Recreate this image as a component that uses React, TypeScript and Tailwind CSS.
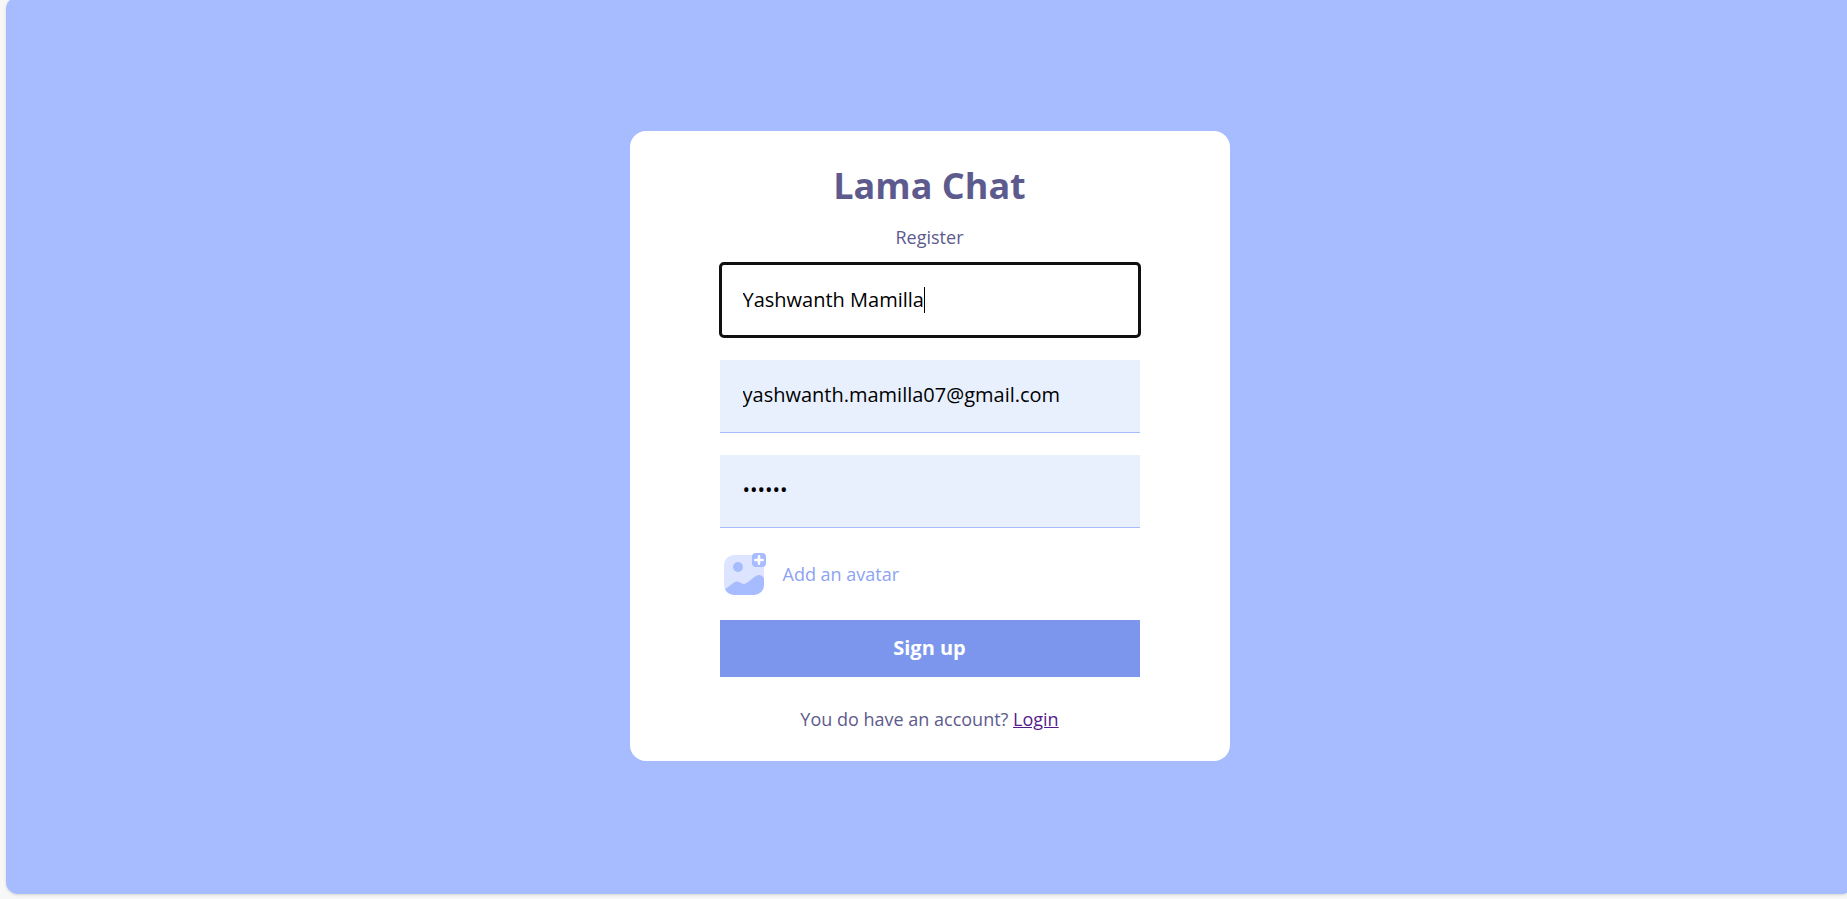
import React from "react";

const field =
  "h-[73px] w-full border-b border-[#a7bcff] bg-[#e8f0fe] px-[23px] pb-0.5 text-xl text-black outline-none";

function AvatarIcon() {
  return (
    <svg width="42" height="42" viewBox="0 0 42 42" aria-hidden="true">
      <defs>
        <clipPath id="frame">
          <rect x="0" y="2" width="40" height="40" rx="10" />
        </clipPath>
      </defs>
      <rect x="0" y="2" width="40" height="40" rx="10" fill="#dde4ff" />
      <path
        clipPath="url(#frame)"
        d="M0 37 L10 29.500 C12 28 14 28 16 29.500 C19 31.500 21 31.500 24 29 L31 23.500 C33.500 21.500 36.500 21.500 38.500 23.500 L40 25 V42 H0 Z"
        fill="#a7bcff"
      />
      <circle cx="14" cy="14" r="5" fill="#a7bcff" />
      <rect x="28" y="0" width="14" height="14" rx="4" fill="#a7bcff" />
      <path d="M35 3.300 V10.700 M31.300 7 H38.700" stroke="#fff" strokeWidth="2.500" strokeLinecap="round" />
    </svg>
  );
}

export default function App() {
  return (
    <div className="h-screen overflow-hidden bg-[#f7f7f7] pb-[5px] pl-1.5 font-['Open_Sans',sans-serif]">
      <div className="-mt-[3px] -mr-1.5 flex h-[calc(100%+3px)] items-center justify-center rounded-xl bg-[#a7bcff] shadow-[0_1px_3px_rgba(0,0,0,0.14)]">
        <main className="flex w-[600px] flex-col items-center rounded-2xl bg-white px-[90px] pt-[31px] pb-[30px] text-lg/6 text-[#5d5b8d]">
          <h1 className="text-4xl/12 font-bold">Lama Chat</h1>
          <h2 className="mt-[15px]">Register</h2>
          <form className="mt-3.5 flex w-full flex-col gap-[22px]" onSubmit={(e) => e.preventDefault()}>
            <div className="relative pb-px">
              <input
                aria-label="Display name"
                type="text"
                defaultValue="Yashwanth Mamilla"
                className="block h-[74px] w-full rounded-sm bg-white px-[23px] text-xl text-black outline-3 -outline-offset-2 outline-[#101010]"
              />
              <span className="absolute top-1/2 left-[204px] h-[26px] w-px -translate-y-1/2 bg-black" />
            </div>
            <input
              aria-label="Email"
              type="email"
              defaultValue="yashwanth.mamilla07@gmail.com"
              className={field}
            />
            <input aria-label="Password" type="password" defaultValue="123456" className={field} />
            <label className="flex h-12 cursor-pointer items-center gap-[17px] pl-1 text-[#8da4f1]">
              <input type="file" className="sr-only" />
              <AvatarIcon />
              <span>Add an avatar</span>
            </label>
            <button type="submit" className="h-[57px] bg-[#7b96ec] text-xl font-bold text-white">
              Sign up
            </button>
          </form>
          <p className="mt-[30px]">
            You do have an account?{" "}
            <a href="#login" className="text-[#551a8b] underline">
              Login
            </a>
          </p>
        </main>
      </div>
    </div>
  );
}
